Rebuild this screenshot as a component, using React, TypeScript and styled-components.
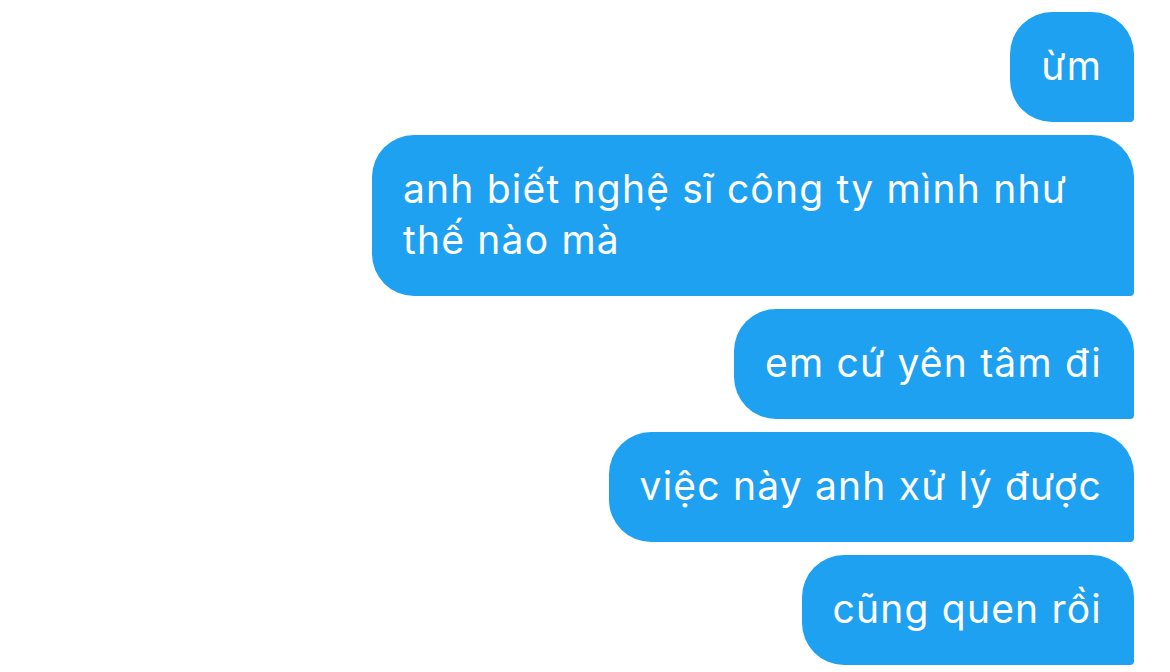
import React from "react";
import styled, { createGlobalStyle } from "styled-components";

const Global = createGlobalStyle`
  html, body { margin: 0; padding: 0; background: #ffffff; }
  body { font-family: Inter, "Noto Sans", sans-serif; }
`;

const Thread = styled.div`
  display: flex;
  flex-direction: column;
  align-items: flex-end;
  gap: 13px;
  padding: 12px 36px 0 0;
  width: 1170px;
  height: 672px;
  box-sizing: border-box;
  overflow: hidden;
`;

const Bubble = styled.div`
  box-sizing: border-box;
  max-width: 762px;
  background: #1fa1f2;
  color: #ffffff;
  font-family: Inter, "Noto Sans", sans-serif;
  font-size: 39px;
  line-height: 51px;
  letter-spacing: 1.2px;
  padding: 28px 32px 31px 31px;
  border-radius: 42px 42px 4px 42px;
`;

const messages = [
  "ừm",
  "anh biết nghệ sĩ công ty mình như thế nào mà",
  "em cứ yên tâm đi",
  "việc này anh xử lý được",
  "cũng quen rồi",
];

export default function App() {
  return (
    <>
      <Global />
      <Thread>
        {messages.map((m, i) => (
          <Bubble key={i}>{m}</Bubble>
        ))}
      </Thread>
    </>
  );
}
